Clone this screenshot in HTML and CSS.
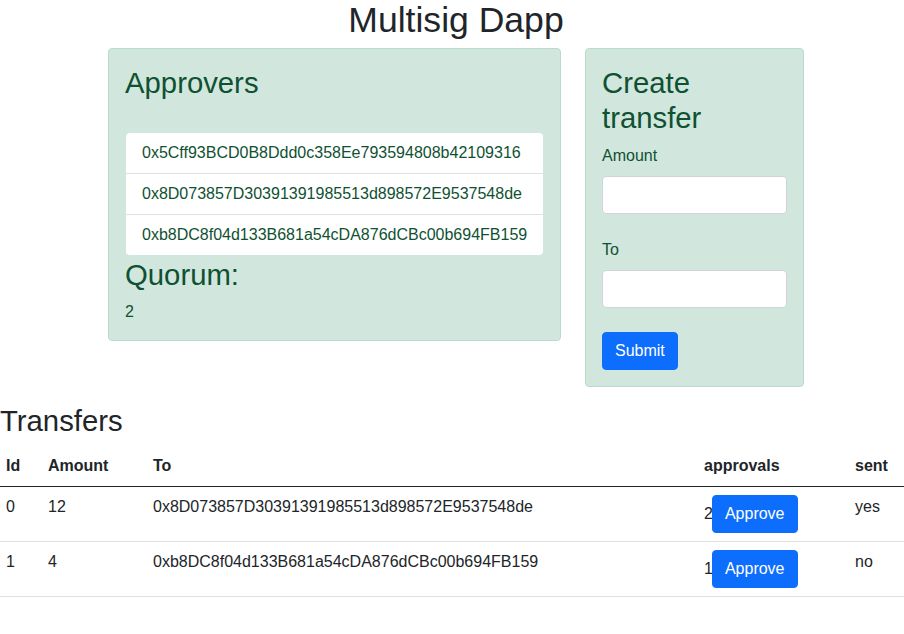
FILE: index.html
```html
<!DOCTYPE html>
<html lang="en">
<head>
<meta charset="utf-8">
<title>Multisig Dapp</title>
<link rel="stylesheet" href="styles.css">
</head>
<body>
<div class="wrap">
  <h1 class="title">Multisig Dapp</h1>
  <div class="panels">
    <div class="card approvers">
      <h2 class="card-head spaced">Approvers</h2>
      <ul class="list">
        <li class="list-item">0x5Cff93BCD0B8Ddd0c358Ee793594808b42109316</li>
        <li class="list-item">0x8D073857D30391391985513d898572E9537548de</li>
        <li class="list-item">0xb8DC8f04d133B681a54cDA876dCBc00b694FB159</li>
      </ul>
      <h2 class="card-head quorum">Quorum:</h2>
      <div class="quorum-value">2</div>
    </div>
    <div class="card create">
      <h2 class="card-head create-head">Create transfer</h2>
      <form class="form">
        <div class="field">
          <label class="label" for="amount">Amount</label>
          <input class="input" id="amount" type="text">
        </div>
        <div class="field">
          <label class="label" for="to">To</label>
          <input class="input" id="to" type="text">
        </div>
        <button class="btn" type="button">Submit</button>
      </form>
    </div>
  </div>
</div>
<h2 class="section-title">Transfers</h2>
<table class="table">
  <colgroup>
    <col class="c-id">
    <col class="c-amount">
    <col class="c-to">
    <col class="c-approvals">
    <col class="c-sent">
  </colgroup>
  <thead>
    <tr><th>Id</th><th>Amount</th><th>To</th><th>approvals</th><th>sent</th></tr>
  </thead>
  <tbody>
    <tr>
      <td>0</td><td>12</td><td>0x8D073857D30391391985513d898572E9537548de</td>
      <td>2<button class="btn btn-approve" type="button">Approve</button></td><td>yes</td>
    </tr>
    <tr>
      <td>1</td><td>4</td><td>0xb8DC8f04d133B681a54cDA876dCBc00b694FB159</td>
      <td>1<button class="btn btn-approve" type="button">Approve</button></td><td>no</td>
    </tr>
  </tbody>
</table>
</body>
</html>
```
FILE: styles.css
```css
* { box-sizing: border-box; }

body {
  margin: 0;
  font-family: "Liberation Sans", Arial, sans-serif;
  font-size: 16px;
  line-height: 1.5;
  color: #212529;
  background: #fff;
}

.wrap {
  width: 696px;
  margin-left: 108px;
}

.title {
  margin: -1.5px 0 6.8px;
  font-size: 35.56px;
  font-weight: 400;
  line-height: 1.2;
  text-align: center;
}

.panels {
  display: flex;
  align-items: flex-start;
  gap: 24px;
}

.card {
  background: #d1e7dd;
  border: 1px solid #badbcc;
  border-radius: 4px;
  color: #0f5132;
  padding: 16px;
}

.approvers { width: 453px; }
.create { width: 219px; }

.card-head {
  margin: 0 0 8px;
  font-size: 29.3px;
  font-weight: 400;
  line-height: 1.2;
}

.card-head.spaced { margin-bottom: 33px; }
.card-head.quorum { margin-top: 2px; }
.card-head.create-head { margin-bottom: 9px; }

.list {
  list-style: none;
  margin: 0 1px;
  padding: 0;
  background: #fff;
  border-radius: 4px;
}

.list-item {
  padding: 8px 16px;
  color: #0f5132;
}

.list-item + .list-item { border-top: 1px solid #dee2e6; }

.form { margin: 0; }

.field { margin-bottom: 24px; }

.label {
  display: block;
  margin-bottom: 8px;
}

.input {
  display: block;
  width: 100%;
  height: 38px;
  padding: 6px 12px;
  font: inherit;
  border: 1px solid #ced4da;
  border-radius: 4px;
  background: #fff;
}

.btn {
  display: inline-block;
  padding: 6px 12px;
  font-family: inherit;
  font-size: 16px;
  line-height: 1.5;
  color: #fff;
  background: #0d6efd;
  border: 1px solid #0d6efd;
  border-radius: 4px;
  vertical-align: baseline;
}

.btn-approve { margin-left: -1px; }

.section-title {
  margin: 16px 0 8px;
  font-size: 29.3px;
  font-weight: 400;
  line-height: 1.2;
}

.table {
  width: 904px;
  border-collapse: collapse;
  table-layout: fixed;
  vertical-align: top;
}

.c-id { width: 40px; }
.c-amount { width: 105px; }
.c-to { width: 551px; }
.c-approvals { width: 151px; }
.c-sent { width: 57px; }

.table th,
.table td {
  padding: 8px;
  text-align: left;
  vertical-align: top;
  border-bottom: 1px solid #dee2e6;
}

.table th:first-child,
.table td:first-child { padding-left: 6px; }

.table th {
  font-weight: 700;
  border-bottom: 1px solid #212529;
}
```
